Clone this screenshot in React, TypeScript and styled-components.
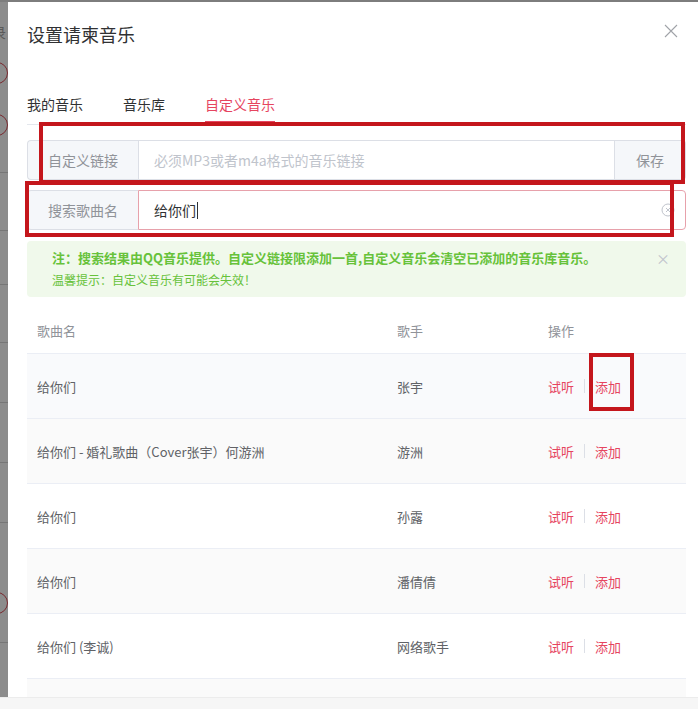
import styled, { createGlobalStyle } from 'styled-components';

const GlobalStyle = createGlobalStyle`
    html, body {
        margin: 0;
        padding: 0;
        height: 709px;
        overflow: hidden;
        font-family: 'Noto Sans CJK SC', 'Noto Sans', sans-serif;
    }
`;

const songs = [
    { name: '给你们', singer: '张宇' },
    { name: '给你们 - 婚礼歌曲（Cover张宇）何游洲', singer: '游洲' },
    { name: '给你们', singer: '孙露' },
    { name: '给你们', singer: '潘倩倩' },
    { name: '给你们 (李诚)', singer: '网络歌手' },
    { name: '', singer: '' },
];

const marks = [
    { top: 60, kind: 'ring' },
    { top: 112, kind: 'ring' },
    { top: 170, kind: 'line' },
    { top: 228, kind: 'line' },
    { top: 282, kind: 'line' },
    { top: 340, kind: 'line' },
    { top: 400, kind: 'line' },
    { top: 460, kind: 'line' },
    { top: 520, kind: 'line' },
    { top: 590, kind: 'ring' },
    { top: 640, kind: 'line' },
];

export default function App(){
    return (
        <Page>
            <GlobalStyle/>
            <Backdrop>
                <Strip>
                    <StripChar>录</StripChar>
                    {marks.map((m, i) => (
                        <StripMark key={i} $kind={m.kind} style={{ top: m.top }}/>
                    ))}
                </Strip>
                <Modal>
                    <Header>
                        <Title>设置请柬音乐</Title>
                        <CloseButton>
                            <svg width="14" height="14" viewBox="0 0 14 14">
                                <path d="M1 1 L13 13 M13 1 L1 13" stroke="#a0a3a8" strokeWidth="1.1" fill="none"/>
                            </svg>
                        </CloseButton>
                    </Header>

                    <Tabs>
                        <Tab>我的音乐</Tab>
                        <Tab>音乐库</Tab>
                        <Tab $active>自定义音乐</Tab>
                    </Tabs>

                    <InputGroup $gap={15}>
                        <Addon>自定义链接</Addon>
                        <Field placeholder="必须MP3或者m4a格式的音乐链接" readOnly/>
                        <SaveAddon>保存</SaveAddon>
                    </InputGroup>

                    <InputGroup $gap={10}>
                        <Addon>搜索歌曲名</Addon>
                        <FocusedField>
                            <FieldText>给你们</FieldText>
                            <Caret/>
                            <ClearIcon>
                                <svg width="14" height="14" viewBox="0 0 14 14">
                                    <circle cx="7" cy="7" r="6" stroke="#c0c4cc" strokeWidth="1" fill="none"/>
                                    <path d="M5 5 L9 9 M9 5 L5 9" stroke="#c0c4cc" strokeWidth="1" fill="none"/>
                                </svg>
                            </ClearIcon>
                        </FocusedField>
                    </InputGroup>

                    <Alert>
                        <AlertTitle>注：搜索结果由QQ音乐提供。自定义链接限添加一首,自定义音乐会清空已添加的音乐库音乐。</AlertTitle>
                        <AlertDesc>温馨提示：自定义音乐有可能会失效！</AlertDesc>
                        <AlertClose>×</AlertClose>
                    </Alert>

                    <Table>
                        <HeadRow>
                            <HeadCell>歌曲名</HeadCell>
                            <HeadCell>歌手</HeadCell>
                            <HeadCell>操作</HeadCell>
                        </HeadRow>
                        {songs.map((s, i) => (
                            <Row key={i} $tone={i === 0 ? 'hover' : i % 2 === 1 ? 'stripe' : 'plain'}>
                                <Cell>{s.name}</Cell>
                                <Cell>{s.singer}</Cell>
                                <Cell>
                                    {s.name && (
                                        <Actions>
                                            <ActionLink>试听</ActionLink>
                                            <Divider/>
                                            <ActionLink>添加</ActionLink>
                                        </Actions>
                                    )}
                                </Cell>
                            </Row>
                        ))}
                    </Table>

                    <Marker style={{ left: 31, top: 120, width: 646, height: 62 }}/>
                    <Marker style={{ left: 17, top: 179, width: 649, height: 56 }}/>
                    <Marker style={{ left: 581, top: 351, width: 45, height: 58 }}/>
                </Modal>
            </Backdrop>
            <BottomBar/>
        </Page>
    );
}

const Page = styled.div`
    display: flex;
    flex-direction: column;
    height: 709px;
    background: #8a8a8a;
`;

const Backdrop = styled.div`
    flex: 1;
    display: flex;
    padding-top: 2px;
    min-height: 0;
    overflow: hidden;
    background: #7d7d7d;
`;

const Strip = styled.div`
    position: relative;
    width: 8px;
    flex-shrink: 0;
    background: #8c8c8c;
    overflow: hidden;
`;

const StripChar = styled.span`
    position: absolute;
    top: 20px;
    left: -8px;
    font-size: 14px;
    color: #5a5a5a;
`;

const StripMark = styled.span<{ $kind: string }>`
    position: absolute;
    left: ${p => p.$kind === 'ring' ? '-14px' : '0'};
    width: ${p => p.$kind === 'ring' ? '20px' : '8px'};
    height: ${p => p.$kind === 'ring' ? '20px' : '1px'};
    border-radius: ${p => p.$kind === 'ring' ? '50%' : '0'};
    border: ${p => p.$kind === 'ring' ? '1.5px solid #7a2a30' : 'none'};
    background: ${p => p.$kind === 'ring' ? 'transparent' : '#767676'};
`;

const Modal = styled.div`
    position: relative;
    flex: 1;
    background: #ffffff;
    padding: 20px 12px 0 19px;
`;

const Header = styled.div`
    display: flex;
    align-items: center;
    justify-content: space-between;
    height: 24px;
`;

const Title = styled.h2`
    margin: 0;
    font-size: 18px;
    font-weight: normal;
    color: #303133;
    line-height: 24px;
`;

const CloseButton = styled.span`
    display: flex;
    margin-right: 8px;
    margin-top: -6px;
`;

const Tabs = styled.div`
    display: flex;
    gap: 40px;
    margin-top: 42px;
    border-bottom: 1px solid #e4e7ed;
    height: 36px;
`;

const Tab = styled.div<{ $active?: boolean }>`
    font-size: 14px;
    line-height: 21px;
    padding-top: 6px;
    color: ${p => p.$active ? '#e6455f' : '#303133'};
    box-sizing: border-box;
    border-bottom: 2px solid ${p => p.$active ? '#e6455f' : 'transparent'};
    margin-bottom: -1px;
    height: 35px;
`;

const InputGroup = styled.div<{ $gap: number }>`
    display: flex;
    height: 40px;
    margin-top: ${p => p.$gap}px;
    width: 659px;
    font-size: 14px;
`;

const Addon = styled.div`
    width: 111px;
    flex-shrink: 0;
    box-sizing: border-box;
    display: flex;
    align-items: center;
    justify-content: center;
    background: #f5f7fa;
    color: #909399;
    border: 1px solid #dcdfe6;
    border-right: none;
    border-radius: 4px 0 0 4px;
`;

const Field = styled.input`
    flex: 1;
    min-width: 0;
    box-sizing: border-box;
    border: 1px solid #dcdfe6;
    padding: 0 15px;
    font-size: 14px;
    font-family: 'Noto Sans CJK SC', 'Noto Sans', sans-serif;
    outline: none;
    &::placeholder {
        color: #c0c4cc;
    }
`;

const SaveAddon = styled(Addon)`
    width: 71px;
    border-right: 1px solid #dcdfe6;
    border-left: none;
    border-radius: 0 4px 4px 0;
`;

const FocusedField = styled.div`
    flex: 1;
    display: flex;
    align-items: center;
    box-sizing: border-box;
    border: 1px solid #e7a1ab;
    border-radius: 0 4px 4px 0;
    padding: 0 10px 0 15px;
`;

const FieldText = styled.span`
    color: #303133;
`;

const Caret = styled.span`
    width: 1px;
    height: 17px;
    background: #303133;
    margin-left: 1px;
`;

const ClearIcon = styled.span`
    display: flex;
    margin-left: auto;
`;

const Alert = styled.div`
    position: relative;
    width: 659px;
    height: 56px;
    box-sizing: border-box;
    margin-top: 11px;
    padding: 7px 16px 0 25px;
    background: #f0f9eb;
    border-radius: 4px;
    color: #67c23a;
`;

const AlertTitle = styled.div`
    font-size: 13px;
    font-weight: bold;
    line-height: 20px;
`;

const AlertDesc = styled.div`
    font-size: 12px;
    line-height: 18px;
    margin-top: 3px;
`;

const AlertClose = styled.span`
    position: absolute;
    right: 16px;
    top: 7px;
    font-size: 14px;
    color: #c0c4cc;
`;

const Table = styled.div`
    width: 659px;
    margin-top: 10px;
    font-size: 13px;
`;

const HeadRow = styled.div`
    display: grid;
    grid-template-columns: 360px 151px 1fr;
    height: 46px;
    align-items: center;
    border-bottom: 1px solid #ebeef5;
    color: #909399;
`;

const HeadCell = styled.div`
    padding-left: 10px;
`;

const Row = styled.div<{ $tone: string }>`
    display: grid;
    grid-template-columns: 360px 151px 1fr;
    height: 65px;
    box-sizing: border-box;
    align-items: center;
    border-bottom: 1px solid #ebeef5;
    color: #606266;
    background: ${p => p.$tone === 'hover' ? '#f9fafc' : p.$tone === 'stripe' ? '#fafafa' : '#ffffff'};
`;

const Cell = styled.div`
    padding-left: 10px;
`;

const Actions = styled.div`
    display: flex;
    align-items: center;
`;

const ActionLink = styled.span`
    color: #e6455f;
`;

const Divider = styled.span`
    width: 1px;
    height: 14px;
    background: #dcdfe6;
    margin: 0 10px;
`;

const Marker = styled.div`
    position: absolute;
    box-sizing: border-box;
    border: 4px solid #c4161c;
    pointer-events: none;
`;

const BottomBar = styled.div`
    height: 11px;
    flex-shrink: 0;
    background: #f6f6f6;
    border-top: 1px solid #ececec;
`;
